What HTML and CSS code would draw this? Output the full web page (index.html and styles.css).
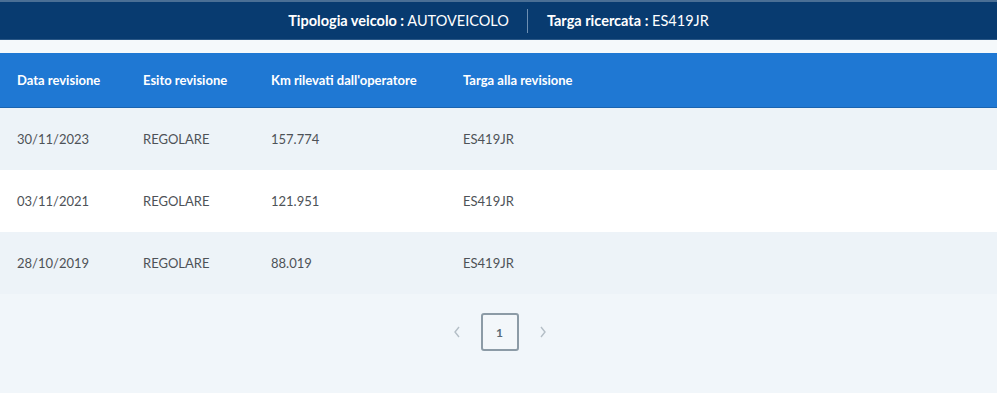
FILE: index.html
```html
<!DOCTYPE html>
<html lang="it">
<head>
<meta charset="utf-8">
<title>Revisioni</title>
<link rel="stylesheet" href="styles.css">
</head>
<body>
<div class="page">
  <div class="topbar">
    <span class="info"><b>Tipologia veicolo :</b> AUTOVEICOLO</span>
    <span class="sep"></span>
    <span class="info"><b>Targa ricercata :</b> ES419JR</span>
  </div>
  <div class="gap"></div>
  <div class="table">
    <div class="row head">
      <div class="c1">Data revisione</div>
      <div class="c2">Esito revisione</div>
      <div class="c3">Km rilevati dall'operatore</div>
      <div class="c4">Targa alla revisione</div>
    </div>
    <div class="row alt">
      <div class="c1">30/11/2023</div>
      <div class="c2">REGOLARE</div>
      <div class="c3">157.774</div>
      <div class="c4">ES419JR</div>
    </div>
    <div class="row">
      <div class="c1">03/11/2021</div>
      <div class="c2">REGOLARE</div>
      <div class="c3">121.951</div>
      <div class="c4">ES419JR</div>
    </div>
    <div class="row alt">
      <div class="c1">28/10/2019</div>
      <div class="c2">REGOLARE</div>
      <div class="c3">88.019</div>
      <div class="c4">ES419JR</div>
    </div>
  </div>
  <div class="pager">
    <span class="arrow"><svg width="8" height="12" viewBox="0 0 8 12"><path d="M6 1 L2 6 L6 11" fill="none" stroke="#b4bec6" stroke-width="1.4"/></svg></span>
    <span class="pagebox">1</span>
    <span class="arrow"><svg width="8" height="12" viewBox="0 0 8 12"><path d="M2 1 L6 6 L2 11" fill="none" stroke="#b4bec6" stroke-width="1.4"/></svg></span>
  </div>
</div>
</body>
</html>
```

FILE: styles.css
```css
* { box-sizing: border-box; }
html, body { margin: 0; padding: 0; background: #ffffff; }
body { font-family: "Lato", "Open Sans", sans-serif; color: #4d5257; }
.page {
  width: 997px;
  height: 393px;
  background: #f1f6fa;
  display: flex;
  flex-direction: column;
}
.topbar {
  height: 40px;
  background: #083b70;
  border-top: 2px solid #4a6f95;
  border-bottom: 1px solid #2a5786;
  display: flex;
  align-items: center;
  justify-content: center;
  color: #ffffff;
  font-size: 14.5px;
}
.topbar b { font-weight: 700; }
.info { white-space: nowrap; }
.sep {
  width: 1px;
  height: 24px;
  background: #6d8fb2;
  margin: 0 19px 0 18px;
}
.gap {
  height: 13px;
  background: #f5f9fb;
}
.table { display: flex; flex-direction: column; }
.row {
  display: flex;
  height: 62px;
  align-items: center;
  font-size: 13px;
  background: #ffffff;
}
.row.alt { background: #edf3f8; }
.row.head {
  height: 55px;
  background: #1f78d3;
  color: #ffffff;
  font-weight: 700;
  border-bottom: 1px solid #1a64b0;
}
.c1 { width: 143px; padding-left: 17px; }
.c2 { width: 128px; }
.c3 { width: 192px; }
.c4 { flex: 1; }
.pager {
  flex: 1;
  display: flex;
  justify-content: center;
  align-items: flex-start;
  padding-top: 19px;
  gap: 20px;
  padding-left: 2px;
}
.arrow {
  height: 38px;
  display: flex;
  align-items: center;
}
.pagebox {
  width: 38px;
  height: 38px;
  border: 2px solid #8c9ba6;
  border-radius: 3px;
  display: flex;
  align-items: center;
  justify-content: center;
  font-size: 12px;
  font-weight: 700;
  color: #5a6a76;
  background: #f3f7fa;
}
```
